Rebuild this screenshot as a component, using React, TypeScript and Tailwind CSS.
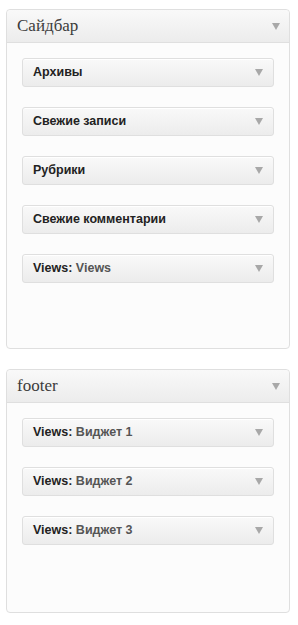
const sidebarWidgets = [
  { title: "Архивы" },
  { title: "Свежие записи" },
  { title: "Рубрики" },
  { title: "Свежие комментарии" },
  { title: "Views:", sub: "Views" },
];

const footerWidgets = [
  { title: "Views:", sub: "Виджет 1" },
  { title: "Views:", sub: "Виджет 2" },
  { title: "Views:", sub: "Виджет 3" },
];

function Arrow() {
  return (
    <svg width="8" height="7" viewBox="0 0 8 7" className="shrink-0">
      <path d="M0 0 H8 L4 7 Z" fill="#a8a8a8" />
    </svg>
  );
}

function Widget({ title, sub }: { title: string; sub?: string }) {
  return (
    <div className="flex h-[29px] items-center justify-between rounded-[3px] border border-[#dfdfdf] bg-gradient-to-b from-[#f9f9f9] to-[#ececec] pl-[10px] pr-[10px] shadow-[inset_0_1px_0_#fff]">
      <span className="text-[12.5px] font-bold text-[#222]">
        {title}
        {sub && <span className="text-[#555]"> {sub}</span>}
      </span>
      <Arrow />
    </div>
  );
}

function Panel({ name, widgets, pb }: { name: string; widgets: { title: string; sub?: string }[]; pb: string }) {
  return (
    <div className="rounded-[4px] border border-[#dfdfdf] bg-[#fcfcfc] shadow-[0_1px_0_#fff]">
      <div className="flex h-[33px] items-center justify-between rounded-t-[4px] border-b border-[#dfdfdf] bg-gradient-to-b from-[#f9f9f9] to-[#ececec] pl-[10px] pr-[9px]">
        <span className="font-['Liberation_Serif',serif] text-[17px] text-[#3c3c3c]">{name}</span>
        <Arrow />
      </div>
      <div className={`flex flex-col gap-[20px] px-[15px] pt-[15px] ${pb}`}>
        {widgets.map((w, i) => (
          <Widget key={i} title={w.title} sub={w.sub} />
        ))}
      </div>
    </div>
  );
}

export default function App() {
  return (
    <div className="min-h-[625px] bg-white pl-[6px] pr-[8px] pt-[9px] font-['Liberation_Sans',Arial,sans-serif]">
      <div className="flex flex-col gap-[20px]">
        <Panel name="Сайдбар" widgets={sidebarWidgets} pb="pb-[65px]" />
        <Panel name="footer" widgets={footerWidgets} pb="pb-[67px]" />
      </div>
    </div>
  );
}
